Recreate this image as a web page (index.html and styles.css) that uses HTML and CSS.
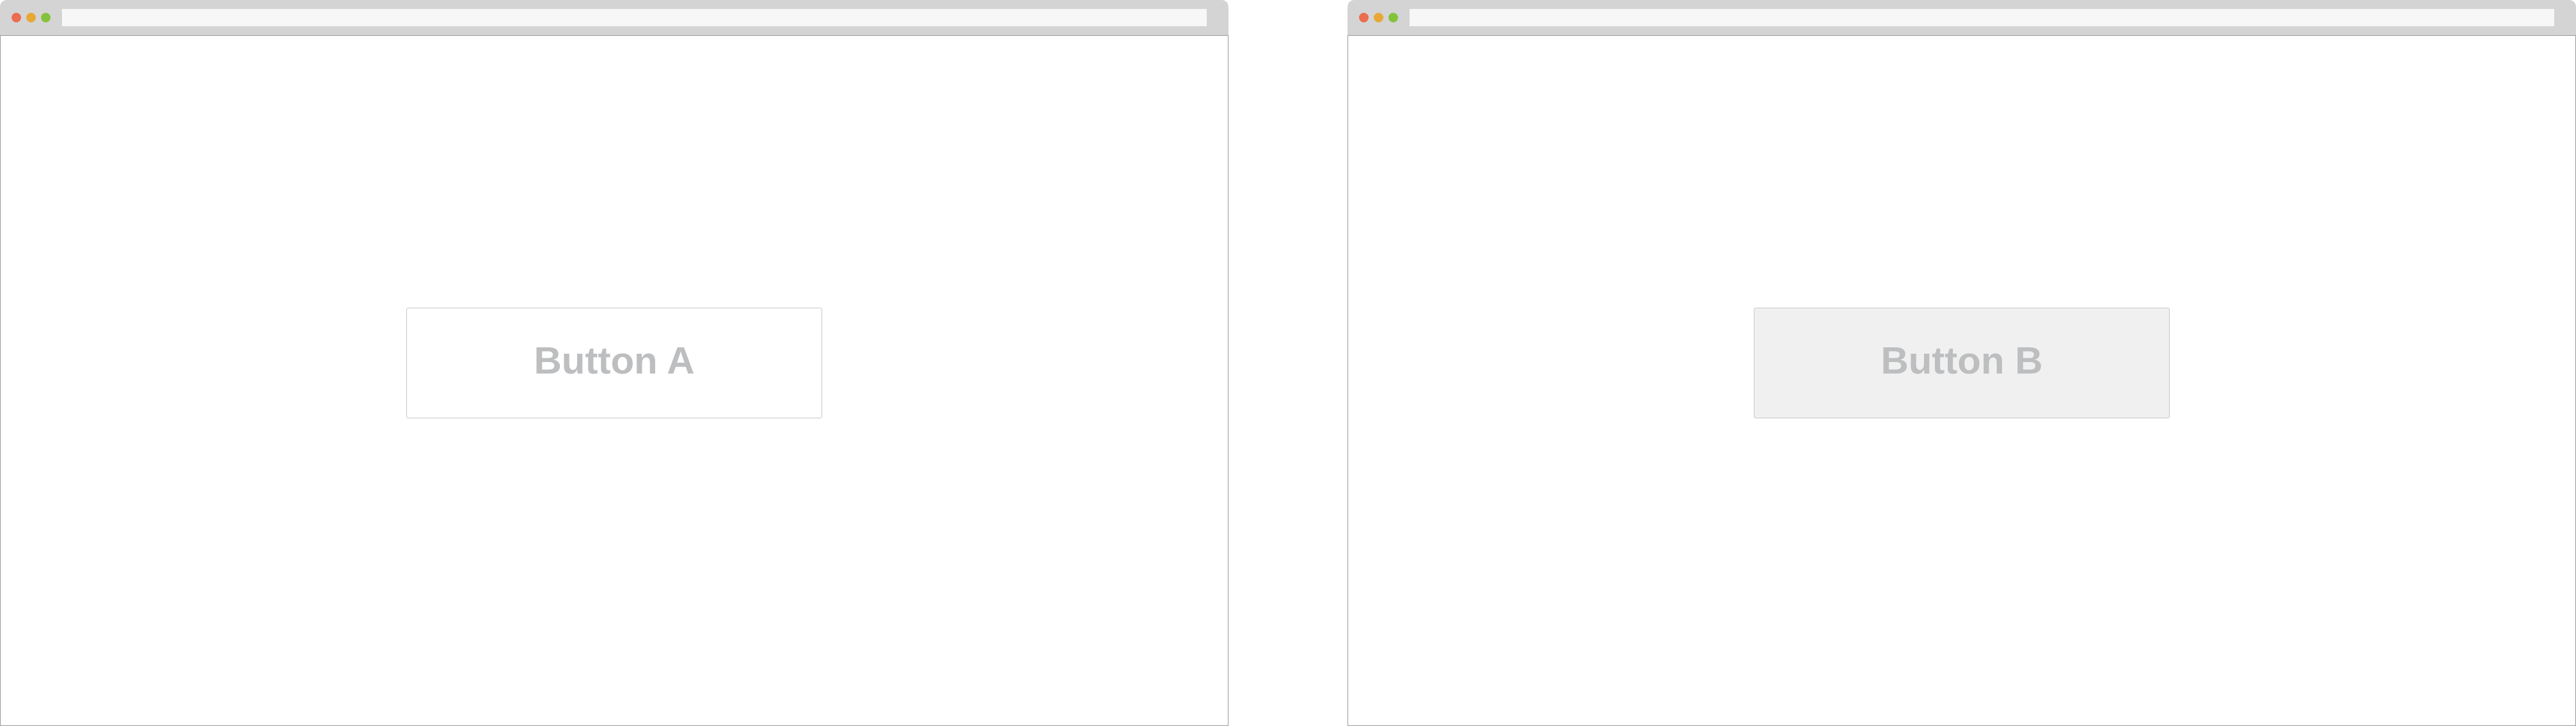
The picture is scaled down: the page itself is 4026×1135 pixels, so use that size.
FILE: index.html
```html
<!DOCTYPE html>
<html>
<head>
<meta charset="utf-8">
<link rel="stylesheet" href="styles.css">
</head>
<body>
<div class="stage">
  <div class="window">
    <div class="titlebar">
      <div class="dots">
        <span class="dot red"></span>
        <span class="dot orange"></span>
        <span class="dot green"></span>
      </div>
      <div class="address"></div>
    </div>
    <div class="content">
      <div class="btn btn-a">Button A</div>
    </div>
  </div>
  <div class="window">
    <div class="titlebar">
      <div class="dots">
        <span class="dot red"></span>
        <span class="dot orange"></span>
        <span class="dot green"></span>
      </div>
      <div class="address"></div>
    </div>
    <div class="content">
      <div class="btn btn-b">Button B</div>
    </div>
  </div>
</div>
</body>
</html>
```
FILE: styles.css
```css
html, body {
  margin: 0;
  padding: 0;
  background: #ffffff;
}
.stage {
  display: flex;
  gap: 186px;
  width: 4026px;
  height: 1135px;
}
.window {
  width: 1920px;
  height: 1135px;
  display: flex;
  flex-direction: column;
}
.titlebar {
  height: 55px;
  background: #d4d4d4;
  border-bottom: 1px solid #9a9a9a;
  border-radius: 10px 10px 0 0;
  display: flex;
  align-items: center;
  padding-left: 18px;
  padding-right: 34px;
}
.dots {
  display: flex;
  gap: 8px;
  margin-right: 18px;
}
.dot {
  width: 15px;
  height: 15px;
  border-radius: 50%;
}
.red { background: #ec6c4f; }
.orange { background: #e8a837; }
.green { background: #84c23b; }
.address {
  flex: 1;
  height: 27px;
  background: #f7f7f7;
}
.content {
  flex: 1;
  border: 1px solid #9a9a9a;
  border-top: none;
  display: flex;
  justify-content: center;
  align-items: flex-start;
  padding-top: 425px;
}
.btn {
  width: 648px;
  height: 171px;
  border: 1px solid #c8c8cb;
  border-radius: 3px;
  display: flex;
  align-items: center;
  justify-content: center;
  font-family: "Liberation Sans", Arial, sans-serif;
  font-weight: bold;
  font-size: 60px;
  color: #bdbec0;
  padding-bottom: 8px;
  box-sizing: border-box;
  height: 173px;
  width: 650px;
}
.btn-a { background: #ffffff; }
.btn-b { background: #f0f0f0; border-color: #c6c6c6; }
```
